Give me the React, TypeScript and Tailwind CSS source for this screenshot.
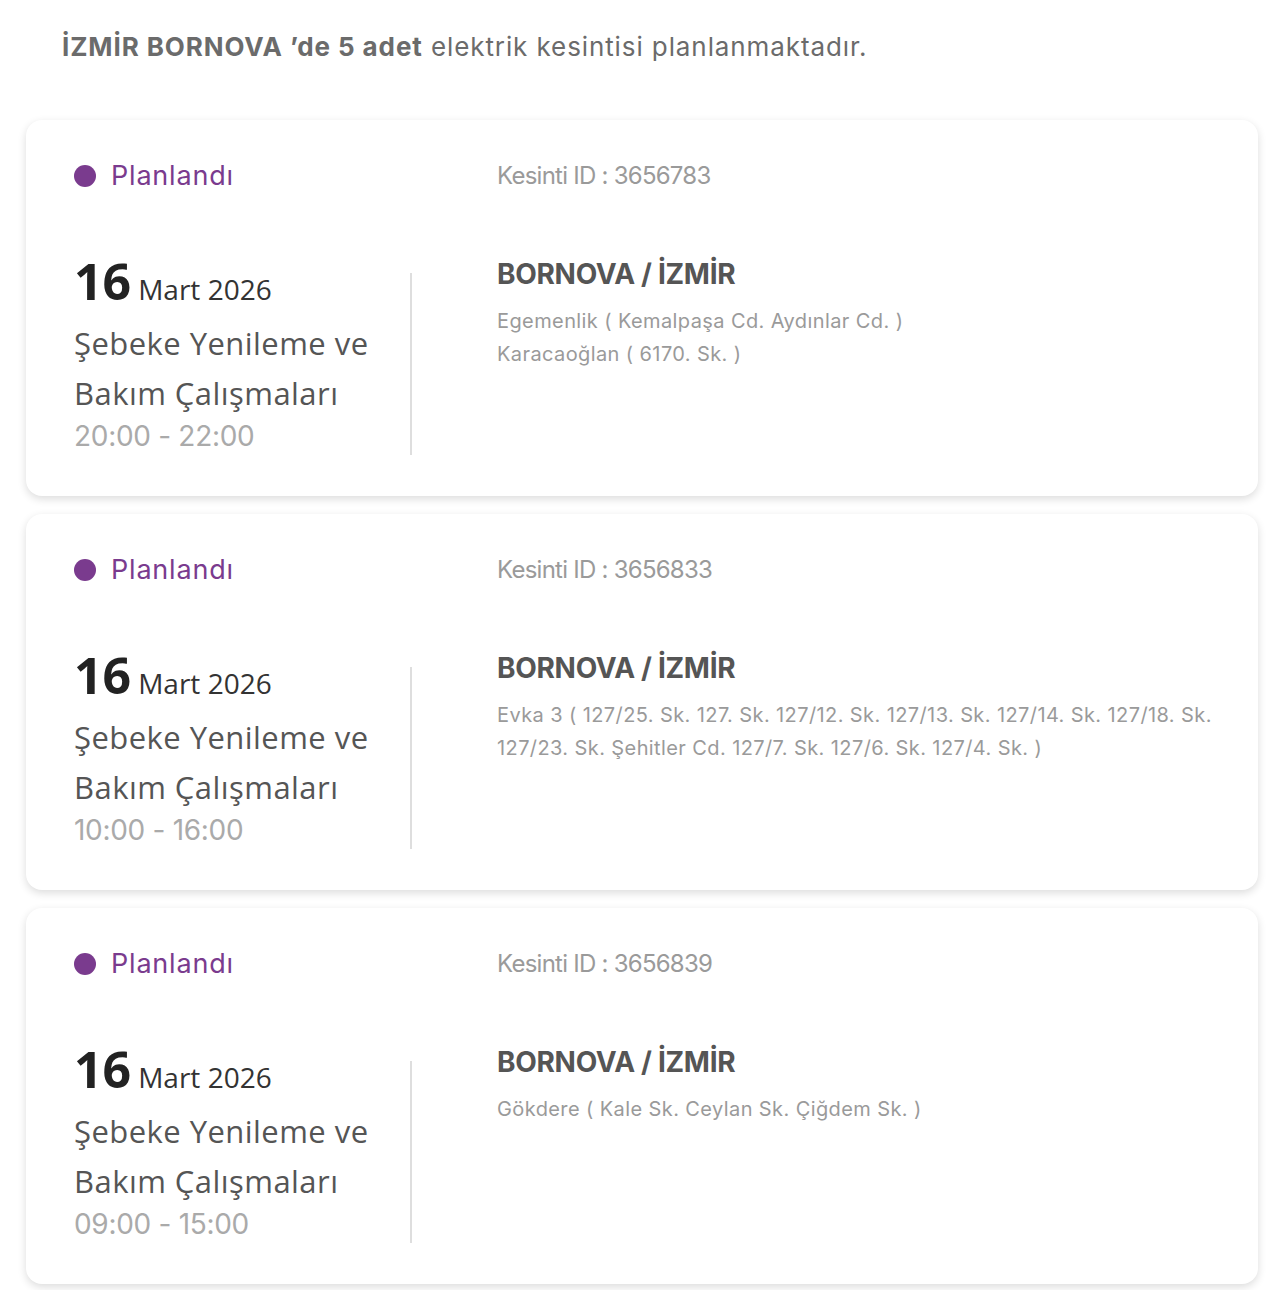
import React from 'react';

interface Outage {
  id: string;
  day: string;
  month: string;
  time: string;
  streets: string[];
}

const outages: Outage[] = [
  {
    id: '3656783',
    day: '16',
    month: 'Mart 2026',
    time: '20:00 - 22:00',
    streets: ['Egemenlik ( Kemalpaşa Cd. Aydınlar Cd. )', 'Karacaoğlan ( 6170. Sk. )'],
  },
  {
    id: '3656833',
    day: '16',
    month: 'Mart 2026',
    time: '10:00 - 16:00',
    streets: [
      'Evka 3 ( 127/25. Sk. 127. Sk. 127/12. Sk. 127/13. Sk. 127/14. Sk. 127/18. Sk. 127/23. Sk. Şehitler Cd. 127/7. Sk. 127/6. Sk. 127/4. Sk. )',
    ],
  },
  {
    id: '3656839',
    day: '16',
    month: 'Mart 2026',
    time: '09:00 - 15:00',
    streets: ['Gökdere ( Kale Sk. Ceylan Sk. Çiğdem Sk. )'],
  },
];

const geo = "font-['Inter','Lato',sans-serif]";
const ubu = "font-['Open_Sans','Noto_Sans',sans-serif]";

function OutageCard({ o }: { o: Outage }) {
  return (
    <div className="w-[1232px] h-[376px] rounded-2xl bg-white shadow-[0_3px_8px_rgba(0,0,0,0.14)] pl-[48px] pt-[38px]">
      <div className="flex items-center h-[36px]">
        <div className="w-[336px] flex items-center gap-[15px]">
          <span className="w-[22px] h-[22px] rounded-full bg-[#7a3b8e]" />
          <span className={`${geo} text-[27px] tracking-[0.8px] text-[#7a3b8e]`}>Planlandı</span>
        </div>
        <div className={`${geo} pl-[87px] text-[24px] tracking-[-0.75px] text-[#9a9a9a]`}>
          Kesinti ID : {o.id}
        </div>
      </div>

      <div className="flex items-start mt-[62px]">
        <div className="w-[336px]">
          <div className={`${ubu} flex items-baseline gap-[7px] leading-[56px] -mt-[3px]`}>
            <span className="text-[50px] font-bold text-[#222]">{o.day}</span>
            <span className="text-[28px] text-[#333]">{o.month}</span>
          </div>
          <div className={`${ubu} text-[31px] leading-[50px] tracking-[0.45px] text-[#555] mt-[1px]`}>
            Şebeke Yenileme ve
            <br />
            Bakım Çalışmaları
          </div>
          <div className={`${geo} text-[28px] leading-[40px] tracking-[-0.3px] text-[#aaaaaa] -mt-[2px]`}>{o.time}</div>
        </div>
        <div className="w-[2px] h-[182px] mt-[17px] bg-[#dedede]" />
        <div className={`${geo} pl-[85px] pr-[20px] flex-1`}>
          <div className="text-[28px] font-bold leading-[36px] tracking-[-0.3px] text-[#555]">
            BORNOVA / İZMİR
          </div>
          <div className="mt-[13px] text-[20px] leading-[33px] tracking-[0.4px] text-[#9a9a9a]">
            {o.streets.map((s) => (
              <div key={s}>{s}</div>
            ))}
          </div>
        </div>
      </div>
    </div>
  );
}

export default function App() {
  return (
    <div className="w-[1280px] h-[1290px] bg-white overflow-hidden">
      <p className={`${geo} pl-[62px] pt-[27px] text-[26px] leading-[39px] tracking-[0.9px] text-[#6b6b6b]`}>
        <span className="font-bold">İZMİR BORNOVA ’de 5 adet</span> elektrik kesintisi planlanmaktadır.
      </p>
      <div className="flex flex-col gap-[18px] pl-[26px] mt-[54px]">
        {outages.map((o) => (
          <OutageCard key={o.id} o={o} />
        ))}
      </div>
    </div>
  );
}
